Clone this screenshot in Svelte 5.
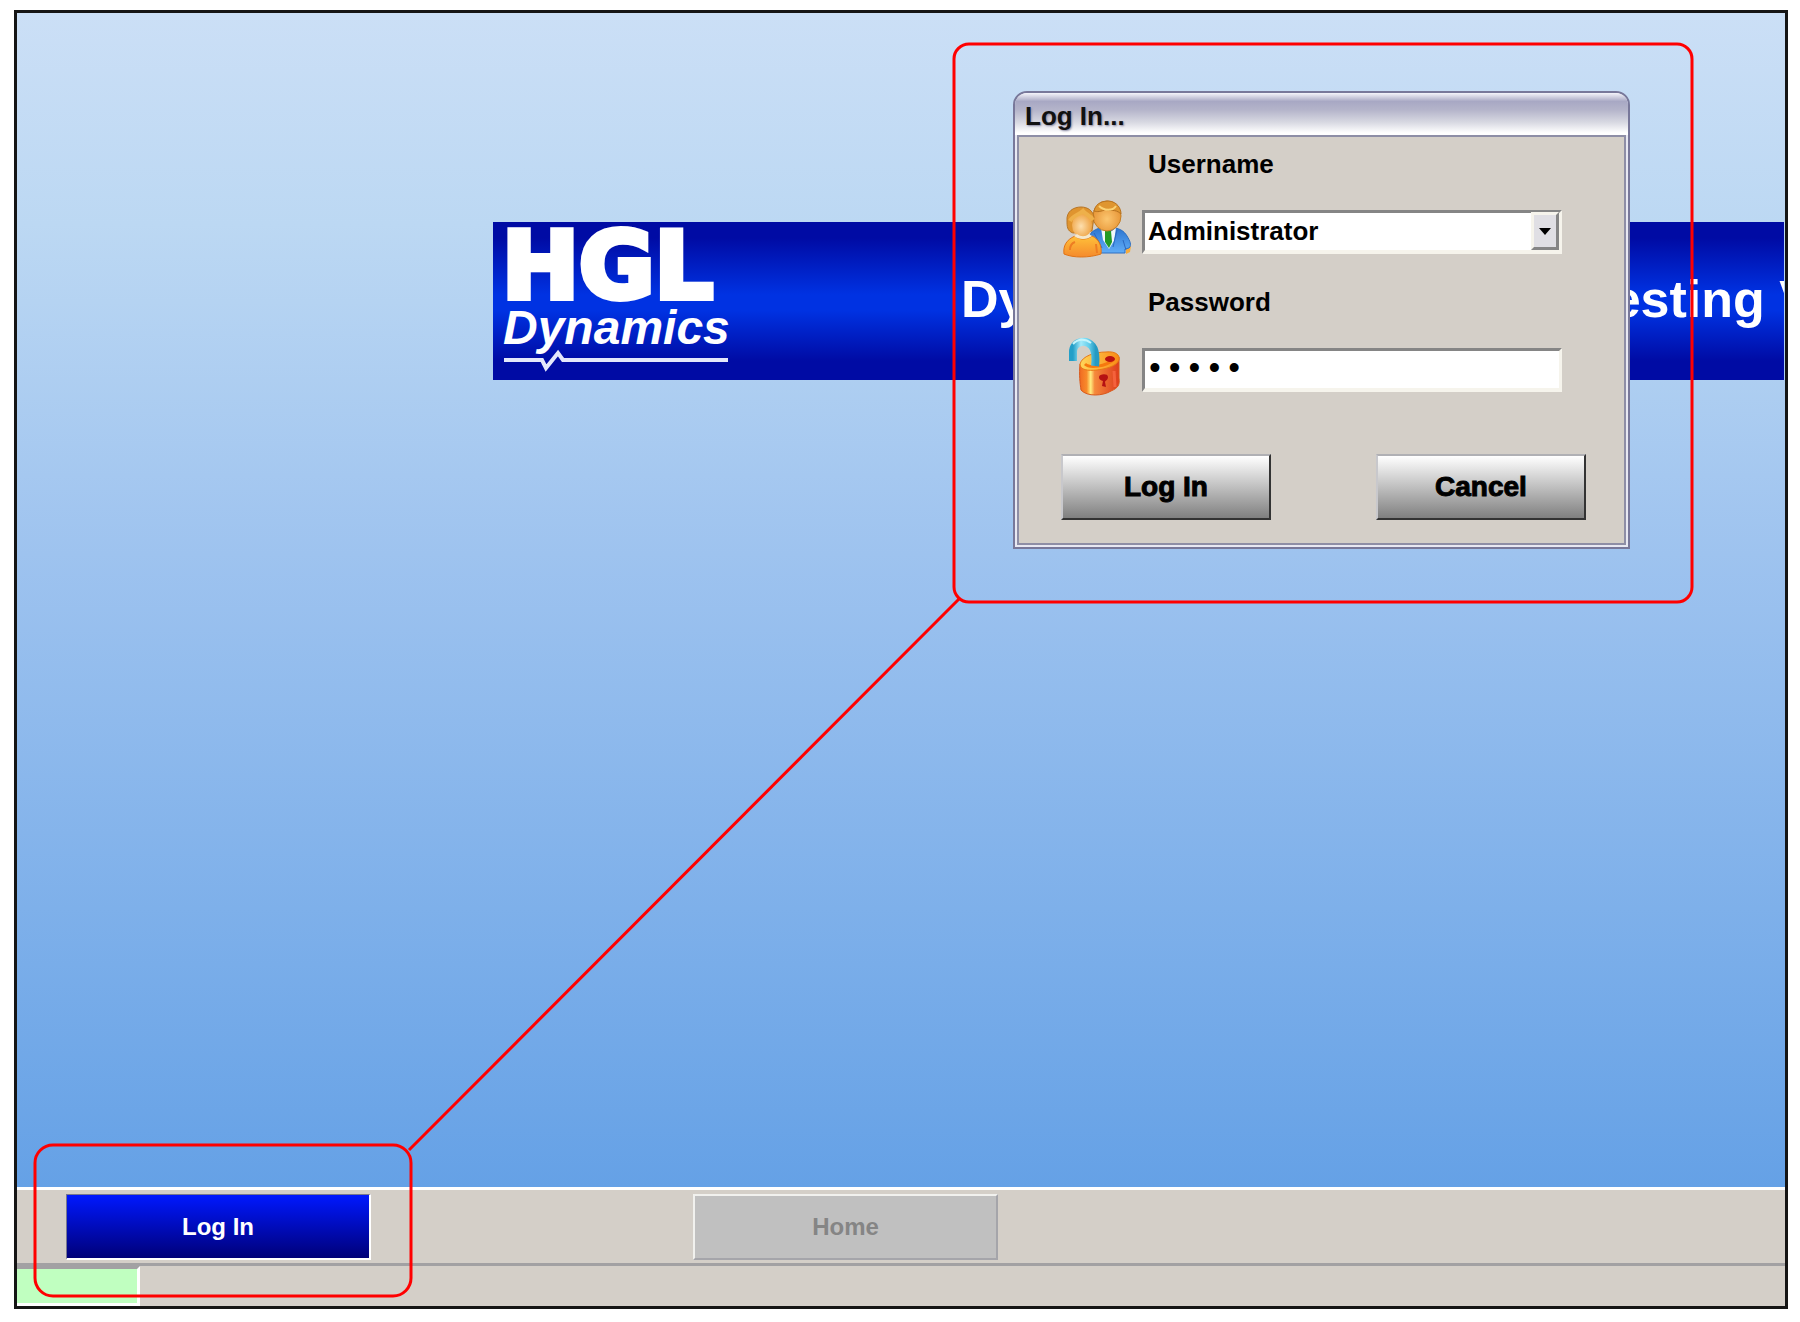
<script>
  let username = "Administrator";
  let password = "admin";

  const users = ["Administrator", "Operator", "Guest"];
</script>

<main>
  <div class="frame">
    <section class="stage">
      <header class="banner">
        <svg class="logo" width="240" height="158" viewBox="0 0 240 158" role="img" aria-label="HGL Dynamics">
          <text class="logo-top" x="9" y="76">HGL</text>
          <text class="logo-name" x="10" y="122">Dynamics</text>
          <path d="M11 138H49L53 146L65 131L70 138H235" fill="none" stroke="#e4e8fb" stroke-width="4" />
        </svg>
        <h1>
          <span>Dynamic</span>
          <span>Testing V</span>
        </h1>
      </header>
    </section>

    <nav class="toolbar">
      <button class="tool active">Log In</button>
      <button class="tool" disabled>Home</button>
    </nav>

    <footer class="status">
      <div class="indicator"></div>
    </footer>

    <form class="dialog" on:submit|preventDefault>
      <h2>Log In...</h2>
      <div class="body">
        <div class="field">
          <label for="username">Username</label>
          <svg class="icon" width="72" height="60" viewBox="0 0 72 60">
            <defs>
              <radialGradient id="face" cx="45%" cy="55%">
                <stop offset="0" stop-color="#fddfae" />
                <stop offset="1" stop-color="#f0a94e" />
              </radialGradient>
              <radialGradient id="man" cx="50%" cy="60%">
                <stop offset="0" stop-color="#fbc670" />
                <stop offset="1" stop-color="#e8983a" />
              </radialGradient>
              <linearGradient id="shirt" x1="0" y1="0" x2="0" y2="1">
                <stop offset="0" stop-color="#ffc13a" />
                <stop offset="1" stop-color="#f58a2c" />
              </linearGradient>
              <linearGradient id="suit" x1="0" y1="0" x2="0" y2="1">
                <stop offset="0" stop-color="#2c74cf" />
                <stop offset="1" stop-color="#60adf7" />
              </linearGradient>
            </defs>
            <path d="M65 48L70 47L69 53L65 55Z" fill="#f7ab3a" />
            <path d="M30 34C36 28 44 28 48 29C58 28 63 32 66 37C69 42 71 46 68 49L64 50L64 54H33L28 42Z" fill="url(#suit)" stroke="#2e6fc0" />
            <path d="M40 29L48 34L55 29L53 42L48 50L42 41Z" fill="#f1f8fb" />
            <path d="M44 32H50L51 43L48 49L44 43Z" fill="#229a25" />
            <path d="M33 34L41 49M56 31L52 48M62 41L65 51" stroke="#2b68bf" fill="none" />
            <ellipse cx="46" cy="17" rx="14" ry="15" fill="url(#man)" stroke="#c47d22" />
            <path d="M33 12C35 3 43 2 48 2C56 3 60 9 60 15C54 9 48 13 45 10C40 13 36 13 33 12Z" fill="#df9630" stroke="#b77220" />
            <path d="M38 7C43 12 52 12 55 7" fill="none" stroke="#fbd375" stroke-width="2" />
            <path d="M6 22C5 12 13 8 20 8C27 8 32 12 33 18L31 32L12 34C6 32 6 27 6 22Z" fill="#df942f" stroke="#b87525" />
            <ellipse cx="21" cy="26" rx="10" ry="12" fill="url(#face)" />
            <path d="M9 22C12 16 18 16 22 12C25 16 29 16 32 21" fill="none" stroke="#eeb04a" stroke-width="4" />
            <path d="M3 55C2 47 5 41 14 37C20 42 27 40 31 37C38 40 41 47 40 55C28 59 12 59 3 55Z" fill="url(#shirt)" stroke="#df7417" />
            <path d="M13 37C18 41 26 41 31 37L28 35C24 38 20 38 16 35Z" fill="#f5e8cb" />
            <path d="M9 51C9 47 11 44 14 43M35 45L36 54" stroke="#ed7d23" stroke-width="2" fill="none" />
          </svg>
          <div class="combo">
            <select id="username" bind:value={username}>
              {#each users as user}
                <option>{user}</option>
              {/each}
            </select>
            <span class="arrow">
              <svg width="12" height="7" viewBox="0 0 12 7"><path d="M0 0H12L6 7Z" /></svg>
            </span>
          </div>
        </div>

        <div class="field">
          <label for="password">Password</label>
          <svg class="icon" width="72" height="60" viewBox="0 0 72 60">
            <defs>
              <linearGradient id="lock" x1="0" x2="1">
                <stop offset="0" stop-color="#f06a22" />
                <stop offset="0.18" stop-color="#f88b2b" />
                <stop offset="0.28" stop-color="#ffed80" />
                <stop offset="0.38" stop-color="#f58a3c" />
                <stop offset="1" stop-color="#dd3b1d" />
              </linearGradient>
              <linearGradient id="lid" x1="0" x2="1">
                <stop offset="0" stop-color="#ffd65a" />
                <stop offset="1" stop-color="#f98b15" />
              </linearGradient>
              <linearGradient id="shackle" x1="0" x2="1">
                <stop offset="0" stop-color="#249fc8" />
                <stop offset="0.35" stop-color="#a2eafa" />
                <stop offset="0.7" stop-color="#65cfec" />
                <stop offset="1" stop-color="#259ac2" />
              </linearGradient>
            </defs>
            <path d="M19 27C18 38 19 46 20 53C26 60 42 59 50 54C57 51 59 48 58 41V20Z" fill="url(#lock)" stroke="#d8591b" />
            <path d="M19 27C21 19 34 15 45 15C55 14 59 18 58 23C55 30 43 32 36 33C27 34 19 33 19 27Z" fill="url(#lid)" stroke="#e77716" />
            <path d="M24 27C29 32 45 29 52 23" stroke="#f6780e" stroke-width="3" fill="none" />
            <ellipse cx="49" cy="22" rx="5" ry="3" fill="#b91111" />
            <path d="M53 34L54 50" stroke="#f4623c" stroke-width="3" />
            <path d="M38 40C38 37 47 36 47 40C47 43 44 44 44 45L45 50L41 49L42 44C40 43 38 43 38 40Z" fill="#b51213" />
            <path d="M12 24V15C12 4 25 2 31 9C35 14 35 21 34 29" stroke="url(#shackle)" stroke-width="8" fill="none" />
            <path d="M12 7C17 1 25 2 30 6" stroke="#c5f4fc" stroke-width="2" fill="none" />
          </svg>
          <input id="password" type="password" bind:value={password} />
        </div>

        <div class="actions">
          <button type="submit">Log In</button>
          <button type="button">Cancel</button>
        </div>
      </div>
    </form>

    <svg class="callouts">
      <rect x="937" y="31" width="738" height="558" rx="15" />
      <rect x="18" y="1132" width="376" height="151" rx="18" />
      <path d="M392 1137L943 585" />
    </svg>
  </div>
</main>

<style>
  :global(body) {
    background: #fff;
    font-family: "Liberation Sans", Arial, sans-serif;
  }

  main {
    display: flex;
    box-sizing: border-box;
    min-height: 100vh;
    padding: 10px 12px 13px 14px;
  }

  .frame {
    position: relative;
    display: flex;
    flex: 1;
    flex-direction: column;
    min-width: 0;
    border: 3px solid #151515;
    overflow: hidden;
  }

  .stage {
    flex: 1;
    padding: 209px 1px 0 476px;
    background: linear-gradient(#cbdff6, #bcd8f3 18%, #9ec3ef 46%, #65a1e6);
  }

  .banner {
    display: flex;
    align-items: center;
    height: 158px;
    background: linear-gradient(#000ba4 10%, #0032e2 46%, #0032e2 56%, #000ba4 88%);
    color: #fff;
    overflow: hidden;
  }

  .logo {
    flex: none;
  }

  .logo-top {
    font: bold 92px "DejaVu Sans", sans-serif;
    fill: #fff;
    stroke: #fff;
    stroke-width: 6;
  }

  .logo-name {
    font: italic bold 48px "Liberation Sans", sans-serif;
    fill: #fff;
  }

  h1 {
    display: flex;
    gap: 406px;
    margin: 0 0 0 228px;
    padding-bottom: 4px;
    font-size: 52px;
    line-height: 60px;
    white-space: nowrap;
  }

  .toolbar {
    display: flex;
    gap: 322px;
    padding: 4px 49px 3px;
    border-top: 3px solid #fff;
    border-bottom: 3px solid #a2a1a3;
    background: #d4cfc8;
  }

  .tool {
    width: 305px;
    height: 66px;
    padding: 0;
    border: 2px solid;
    border-color: #f1f1ee #a5a5aa #a5a5aa #f1f1ee;
    background: #c0c0c0;
    color: #858585;
    font: bold 24px "Liberation Sans", sans-serif;
  }

  .tool.active {
    border-width: 1px 2px 2px 1px;
    border-color: #77778f #fff #fff #77778f;
    background: linear-gradient(#0018ff, #000078);
    color: #fff;
  }

  .status {
    display: flex;
    height: 40px;
    background: #d4cfc8;
  }

  .indicator {
    width: 120px;
    border: solid #fff;
    border-width: 3px 3px 3px 0;
    border-top-color: #a2a1a3;
    background: #c0ffc0;
  }

  .dialog {
    position: absolute;
    top: 78px;
    left: 996px;
    box-sizing: border-box;
    width: 617px;
    border: 2px solid #78789a;
    border-radius: 14px 14px 0 0;
    background: #e8e8f2;
    overflow: hidden;
  }

  h2 {
    margin: 0;
    padding: 4px 10px 0;
    background: linear-gradient(#f4f4fa, #a8a8c4 20%, #b4b4ca 40%, #d8d9e2 70%, #fff 95%);
    color: #111;
    font-size: 26px;
    line-height: 38px;
    text-shadow: 1px 1px 2px #8888a0;
  }

  .body {
    margin: 0 2px 2px;
    padding: 12px 38px 23px 42px;
    border: 2px solid #8e8ea6;
    background: #d4cfc8;
  }

  .field {
    display: grid;
    grid-template-columns: 81px 420px;
    row-gap: 31px;
    align-items: center;
    margin-bottom: 33px;
  }

  label {
    grid-column: 2;
    padding-left: 6px;
    color: #000;
    font-size: 26px;
    font-weight: bold;
    line-height: 30px;
  }

  .icon {
    margin: -11px 0 -5px;
  }

  .combo {
    display: grid;
  }

  .combo select,
  .combo .arrow {
    grid-area: 1 / 1;
  }

  select,
  input {
    box-sizing: border-box;
    width: 100%;
    height: 44px;
    padding: 0 3px 1px;
    border: solid;
    border-width: 3px 3px 4px 3px;
    border-color: #858585 #f6f4ec #f6f4ec #858585;
    border-radius: 0;
    background: #fff;
    color: #000;
    appearance: none;
    font: bold 26px "Liberation Sans", sans-serif;
  }

  input {
    padding: 1px 0 0;
    font: 33px "Liberation Mono", monospace;
  }

  .arrow {
    display: flex;
    align-items: center;
    justify-content: center;
    justify-self: end;
    box-sizing: border-box;
    width: 28px;
    height: 38px;
    margin: 2px 3px 4px 0;
    border: 3px solid;
    border-color: #f6f4ec #858585 #858585 #f6f4ec;
    background: #e0dfe4;
    pointer-events: none;
  }

  .actions {
    display: flex;
    justify-content: space-between;
    padding-top: 29px;
  }

  .actions button {
    width: 210px;
    height: 66px;
    padding: 0;
    border: 2px solid;
    border-color: #b0b0b4 #333 #333 #c8c8cc;
    background: linear-gradient(#fff, #808080);
    color: #000;
    font: bold 28px "Liberation Sans", sans-serif;
    -webkit-text-stroke: 1px #000;
  }

  .callouts {
    position: absolute;
    inset: 0;
    width: 100%;
    height: 100%;
    fill: none;
    stroke: #f00;
    stroke-width: 3;
    pointer-events: none;
  }
</style>
